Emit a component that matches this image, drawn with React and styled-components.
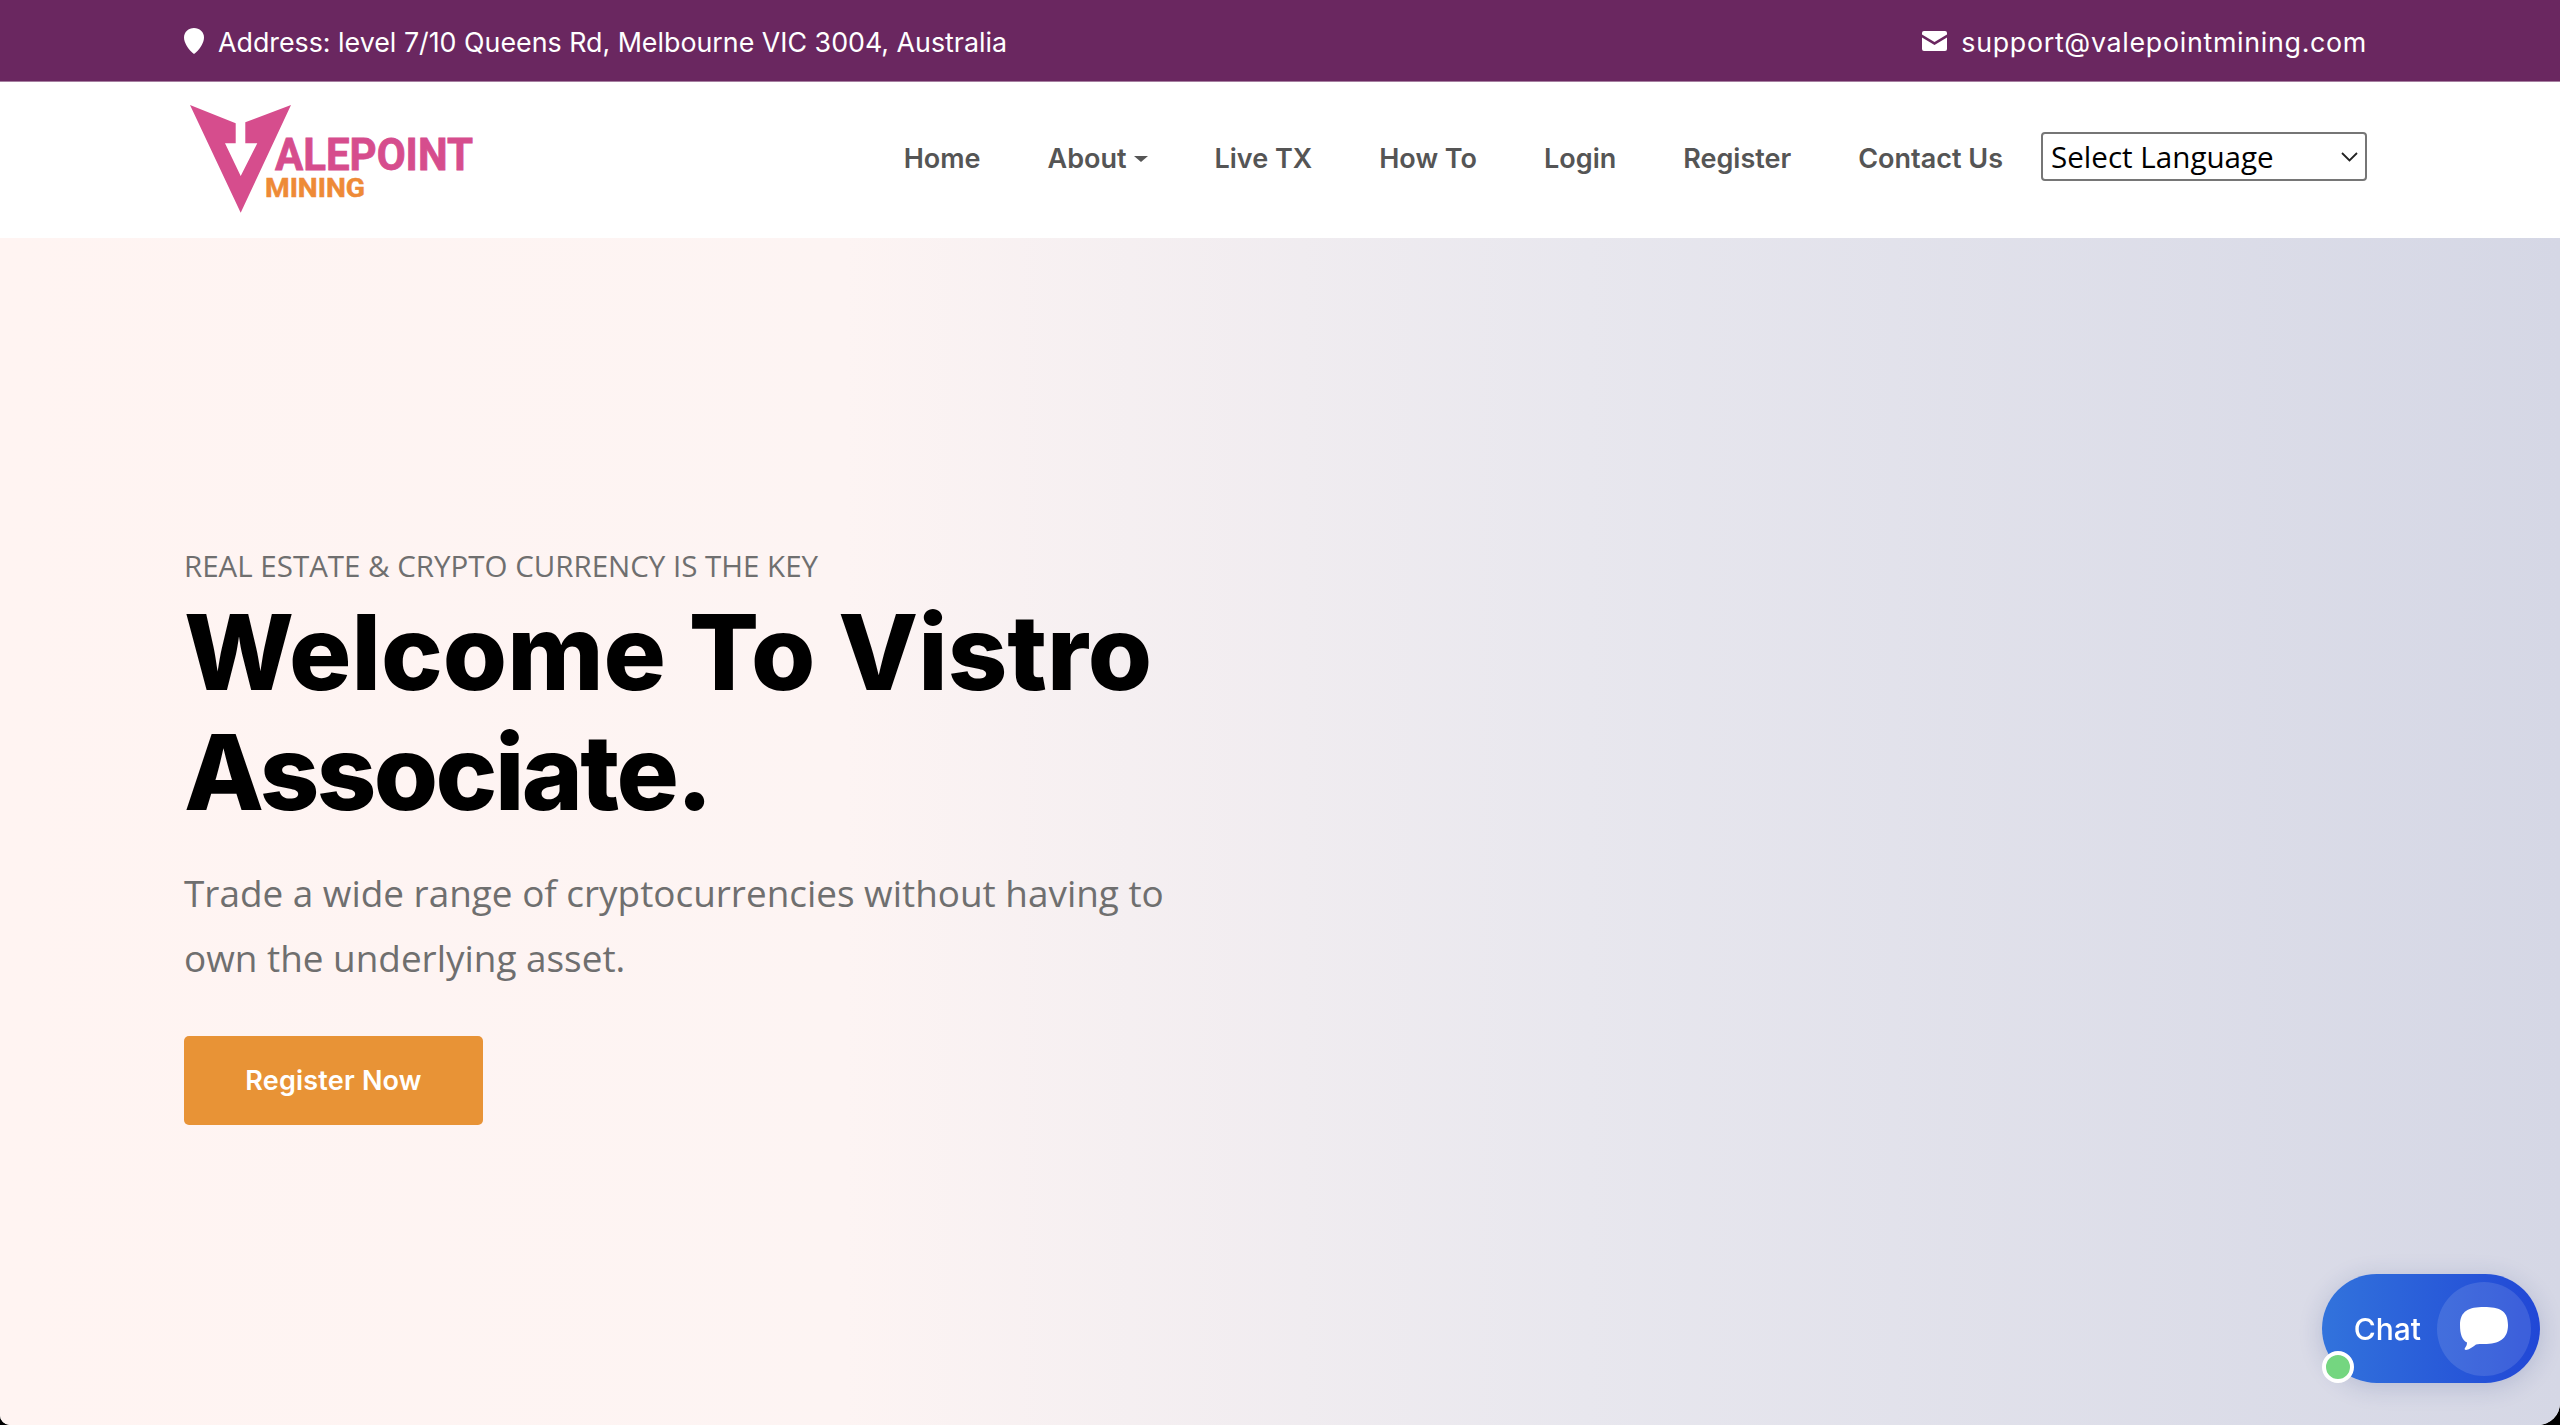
import React from 'react';
import styled, { createGlobalStyle } from 'styled-components';

const GlobalStyle = createGlobalStyle`
    html, body {
        margin: 0;
        padding: 0;
        background: #000;
    }
    * {
        box-sizing: border-box;
    }
`

const Page = styled.div`
    width: 2560px;
    height: 1425px;
    display: flex;
    flex-direction: column;
    overflow: hidden;
    border-radius: 0 0 22px 10px;
    background: #fff;
`

const Container = styled.div`
    width: 2183px;
    margin-left: 184px;
    display: flex;
    align-items: center;
    justify-content: space-between;
`

const TopBar = styled.div`
    height: 82px;
    display: flex;
    background: #6a2760;
    border-bottom: 1px solid #a67fa0;
    color: #fff;
    font-family: Inter, "Liberation Sans", sans-serif;
    font-size: 26.8px;
`

const TopItem = styled.div`
    display: flex;
    align-items: center;
    gap: 14px;
    line-height: 36px;
    letter-spacing: ${props => props.$spacing || 0}px;
`

const TopText = styled.span`
    padding-top: 2px;
`

const NavBar = styled.div`
    height: 156px;
    display: flex;
    background: #fff;
`

const LogoSvg = styled.svg`
    display: block;
    width: 320px;
    height: 140px;
    margin-left: -14px;
`

const NavRight = styled.div`
    display: flex;
    align-items: center;
`

const NavLinks = styled.nav`
    display: flex;
    align-items: center;
    gap: 67px;
    margin-right: 38px;
    margin-top: -3px;
`

const NavLink = styled.a`
    display: flex;
    align-items: center;
    gap: 7px;
    color: #555;
    font-family: Inter, "Liberation Sans", sans-serif;
    font-size: 27px;
    font-weight: 600;
    white-space: nowrap;
`

const Caret = styled.span`
    width: 0;
    height: 0;
    border-left: 7px solid transparent;
    border-right: 7px solid transparent;
    border-top: 6px solid #555;
`

const SelectWrap = styled.div`
    position: relative;
    margin-top: -8px;
    display: flex;
`

const LanguageSelect = styled.select`
    width: 326px;
    height: 49px;
    padding: 0 0 0 8px;
    appearance: none;
    background: #fff;
    border: 2px solid #767676;
    border-radius: 4px;
    color: #000;
    font-family: "Open Sans", sans-serif;
    font-size: 29.6px;
`

const SelectChevron = styled.svg`
    position: absolute;
    top: 20px;
    right: 9px;
    pointer-events: none;
`

const Hero = styled.section`
    flex: 1;
    padding-top: 302px;
    background: linear-gradient(90deg, #fff4f2 0%, #fdf4f3 33%, #e8e7ee 62%, #d5d7e5 100%);
`

const HeroInner = styled.div`
    width: 2183px;
    margin-left: 184px;
`

const Eyebrow = styled.p`
    margin: 0;
    color: #6f6f6f;
    font-family: "Open Sans", sans-serif;
    font-size: 29.5px;
    line-height: 52px;
`

const Title = styled.h1`
    margin: 0;
    color: #000;
    font-family: Inter, "Liberation Sans", sans-serif;
    font-size: 104px;
    font-weight: 800;
    line-height: 120px;
`

const TitleLine = styled.span`
    display: block;
    letter-spacing: ${props => props.$spacing || 0}px;
`

const Lead = styled.p`
    width: 1050px;
    margin: 29px 0 0;
    color: #6f6f6f;
    font-family: "Open Sans", sans-serif;
    font-size: 36.9px;
    line-height: 65px;
`

const RegisterButton = styled.a`
    width: 299px;
    height: 89px;
    margin-top: 45px;
    display: flex;
    align-items: center;
    justify-content: center;
    background: #e89336;
    border-radius: 5px;
    color: #fff;
    font-family: Inter, "Liberation Sans", sans-serif;
    font-size: 27px;
    font-weight: 600;
    letter-spacing: 0.2px;
`

const ChatPill = styled.div`
    position: fixed;
    left: 2322px;
    top: 1274px;
    width: 218px;
    height: 109px;
    padding-right: 9px;
    display: flex;
    align-items: center;
    justify-content: flex-end;
    gap: 16px;
    border-radius: 55px;
    background: linear-gradient(90deg, #3273dc, #2147d6);
    box-shadow: 0 4px 24px rgba(30, 50, 120, 0.18);
    color: #fff;
    font-family: Inter, sans-serif;
    font-size: 30px;
    font-weight: 500;
`

const ChatCircle = styled.div`
    width: 94px;
    height: 94px;
    display: flex;
    align-items: center;
    justify-content: center;
    border-radius: 50%;
    background: rgba(255, 255, 255, 0.12);
`

const StatusDot = styled.span`
    position: absolute;
    left: 0;
    bottom: 0;
    width: 32px;
    height: 32px;
    border: 4px solid #fff;
    border-radius: 50%;
    background: #74d680;
`

const links = ['Home', 'About', 'Live TX', 'How To', 'Login', 'Register', 'Contact Us'];

const Logo = () => (
    <LogoSvg viewBox="0 0 320 140">
        <polygon
            fill="#d64d8d"
            points="20,15 65.7,33.3 65.7,53.3 55,53.3 70.7,86 87.3,53.3 75.3,53.3 75.3,32.3 121,15 70.7,122.7"
        />
        <text x="105" y="80" fill="#d64d8d" stroke="#d64d8d" strokeWidth="0.8" fontFamily="Roboto" fontWeight="700" fontSize="45" textLength="198" lengthAdjust="spacingAndGlyphs">ALEPOINT</text>
        <text x="95" y="107" fill="#ee8a37" stroke="#ee8a37" strokeWidth="0.5" fontFamily="Roboto" fontWeight="700" fontSize="25" textLength="100" lengthAdjust="spacingAndGlyphs">MINING</text>
    </LogoSvg>
);

const App = () => {
    return (
        <Page>
            <GlobalStyle />
            <TopBar>
                <Container>
                    <TopItem>
                        <svg width="20" height="26" viewBox="0 0 20 26">
                            <path fill="#fff" d="M10 0c5.500 0 10 4 10 9.500 0 5.500-5 13-10 16.500C5 22.500 0 15 0 9.500 0 4 4.500 0 10 0z" />
                        </svg>
                        <TopText>Address: level 7/10 Queens Rd, Melbourne VIC 3004, Australia</TopText>
                    </TopItem>
                    <TopItem $spacing={0.7}>
                        <svg width="25" height="20" viewBox="0 0 25 20">
                            <path fill="#fff" d="M2 0h21a2 2 0 0 1 2 2v1.500L12.500 11 0 3.500V2a2 2 0 0 1 2-2z" />
                            <path fill="#fff" d="M0 6.500l12.500 7.500L25 6.500V18a2 2 0 0 1-2 2H2a2 2 0 0 1-2-2z" />
                        </svg>
                        <TopText>support@valepointmining.com</TopText>
                    </TopItem>
                </Container>
            </TopBar>
            <NavBar>
                <Container>
                    <Logo />
                    <NavRight>
                        <NavLinks>
                            {links.map(link => (
                                <NavLink key={link}>
                                    {link}
                                    {link === 'About' && <Caret />}
                                </NavLink>
                            ))}
                        </NavLinks>
                        <SelectWrap>
                            <LanguageSelect defaultValue="">
                                <option value="">Select Language</option>
                            </LanguageSelect>
                            <SelectChevron width="17" height="10" viewBox="0 0 17 10">
                                <path fill="none" stroke="#222" strokeWidth="1.800" d="M1 1l7.500 7.500L16 1" />
                            </SelectChevron>
                        </SelectWrap>
                    </NavRight>
                </Container>
            </NavBar>
            <Hero>
                <HeroInner>
                    <Eyebrow>REAL ESTATE &amp; CRYPTO CURRENCY IS THE KEY</Eyebrow>
                    <Title>
                        <TitleLine>Welcome To Vistro</TitleLine>
                        <TitleLine $spacing={-2.6}>Associate.</TitleLine>
                    </Title>
                    <Lead>Trade a wide range of cryptocurrencies without having to own the underlying asset.</Lead>
                    <RegisterButton>Register Now</RegisterButton>
                </HeroInner>
            </Hero>
            <ChatPill>
                Chat
                <ChatCircle>
                    <svg width="48" height="44" viewBox="0 0 48 44">
                        <path fill="#fff" d="M24 0c15 0 24 3 24 18 0 14-9 19-24 19-3 0-6 0-8 .5-3 2-6 5-10 5.500-1 0-2-1-1-2 1-1.500 2-3 2-5.500C2 33 0 27 0 18 0 4 9 0 24 0z" />
                    </svg>
                </ChatCircle>
                <StatusDot />
            </ChatPill>
        </Page>
    );
}

export default App;
